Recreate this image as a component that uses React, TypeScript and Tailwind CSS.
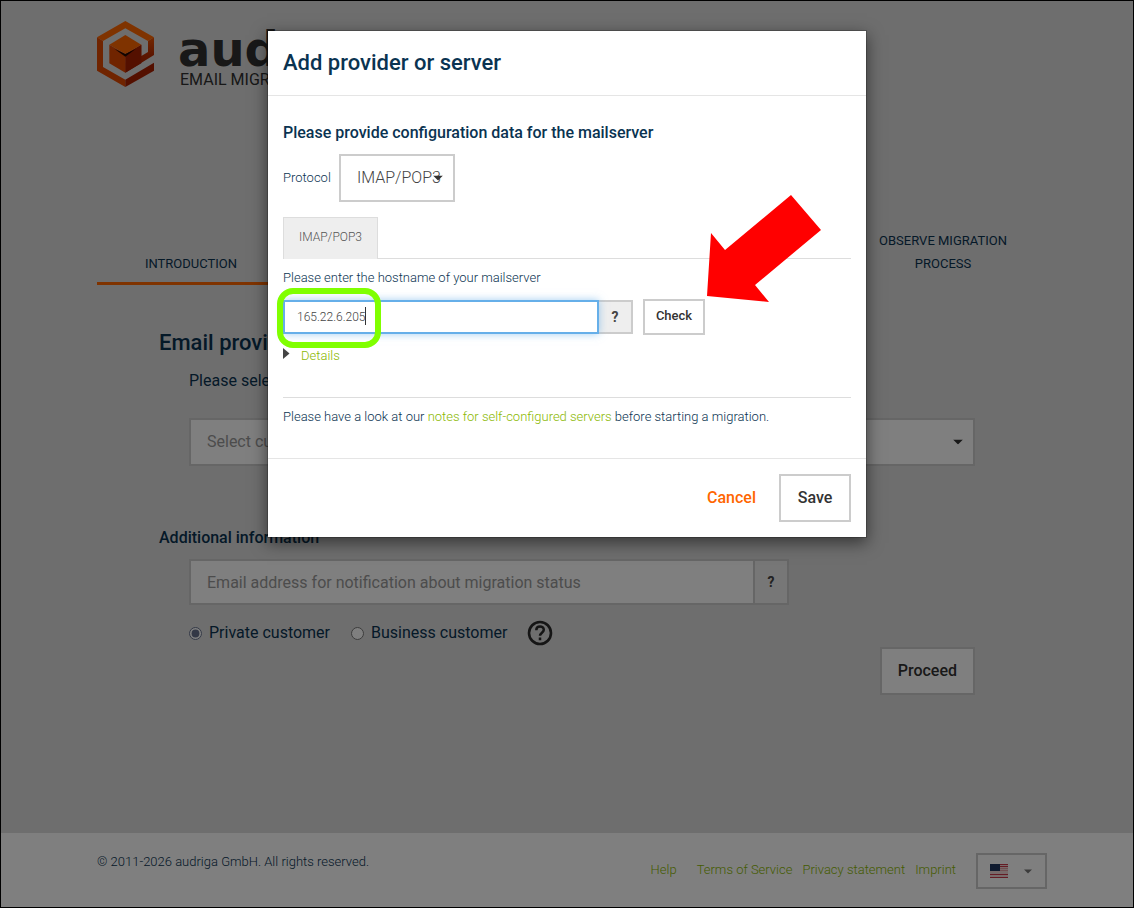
import React from "react";

const caret = "pointer-events-none absolute top-1/2 -translate-y-1/2";

function Caret({ className }: { className: string }) {
  return (
    <svg className={className} width="10" height="5" viewBox="0 0 10 5" aria-hidden="true">
      <path d="M0 0h10L5 5z" fill="currentColor" />
    </svg>
  );
}

function Logo() {
  return (
    <svg width="57" height="66" viewBox="51 63 171 198" aria-hidden="true">
      <defs>
        <linearGradient id="strand" x1="0" y1="0" x2="0" y2="1">
          <stop offset="0" stopColor="#e85000" />
          <stop offset="0.5" stopColor="#b82c00" />
          <stop offset="1" stopColor="#a82000" />
        </linearGradient>
      </defs>
      <path d="M136 63L222 112L204 123L136 85L69 123L51 112z" fill="#ff6600" />
      <path d="M51 112L69 123V201L136 239V261L51 212z" fill="#e04800" />
      <path d="M136 239L222 188V212L136 261z" fill="#a82000" />
      <path d="M136 162L184 134V168L204 156V123L222 112V165L136 218z" fill="url(#strand)" />
      <path d="M136 162L184 134V190L136 218z" fill="#a82000" />
      <path d="M136 105L184 134L136 162L88 134z" fill="#ff6600" />
      <path d="M88 134L136 162V218L88 190z" fill="#e04800" />
      <path d="M103 146L136 162L168 146L136 170z" fill="#220800" />
    </svg>
  );
}

function Flag() {
  return (
    <svg width="18" height="14" viewBox="0 0 18 14" aria-hidden="true">
      <path d="M0 0h18v14H0z" fill="#f0d4d4" />
      <path d="M0 .5h18M0 2.5h18M0 10.5h18M0 13.5h18" stroke="#c8384a" />
      <path d="M0 4.500h18M0 6.500h18" stroke="#e0a0a4" />
      <path d="M0 0h10v7H0z" fill="#20365f" />
    </svg>
  );
}

function Page() {
  return (
    <div className="flex min-h-screen flex-col bg-[#dddddd]">
      <div className="mx-auto w-full max-w-[940px] flex-1 pt-[21px] font-normal">
        <header className="flex h-[66px]">
          <Logo />
          <div className="ml-6 pt-[19px] text-[#303030]">
            <div className="h-[30px] font-['DejaVu_Sans'] text-[48px] leading-[18px] font-bold">aud</div>
            <div className="pl-[2px] text-base leading-5">EMAIL MIGRATION</div>
          </div>
        </header>
        <nav className="mt-[142px] grid grid-cols-5 items-end text-center text-[13px] leading-[23px]">
          <a href="#introduction" className="border-b-3 border-[#ff6600] pb-[7px]">INTRODUCTION</a>
          <a href="#observe" className="col-start-5 px-5 pb-[10px]">OBSERVE MIGRATION PROCESS</a>
        </nav>
        <main className="px-[62px]">
          <h2 className="mt-[43px] text-[22px] leading-[30px] font-medium">Email provider</h2>
          <div className="pl-[30px]">
            <p className="mt-[11px] leading-6">Please select</p>
            <div className="relative mt-[25px]">
              <select aria-label="Current provider" className="h-12 w-full appearance-none border-2 border-[#cccccc] bg-white px-4 text-[#999999]">
                <option>Select current provider</option>
              </select>
              <Caret className={`${caret} right-3 text-[#333333]`} />
            </div>
          </div>
          <h3 className="mt-[60px] leading-6 font-medium">Additional information</h3>
          <div className="pl-[30px]">
            <div className="mt-[9px] flex h-[46px] max-w-[600px]">
              <input type="email" aria-label="Notification email" placeholder="Email address for notification about migration status" className="min-w-0 flex-1 border-2 border-[#cccccc] bg-white px-4 pt-[2px] placeholder:text-[#999999]" />
              <button className="w-[34px] border-2 border-l-0 border-[#cccccc] bg-[#eeeeee] text-sm font-bold text-[#444444]">?</button>
            </div>
            <div className="mt-[15px] flex h-[26px] items-center">
              <label className="flex items-center gap-[7px]">
                <input type="radio" name="customer" defaultChecked className="size-[13px] accent-[#66708c]" />
                Private customer
              </label>
              <label className="ml-[21px] flex items-center gap-[7px]">
                <input type="radio" name="customer" className="size-[13px]" />
                Business customer
              </label>
              <svg className="ml-5" width="26" height="26" viewBox="0 0 26 26" fill="none" stroke="#2a2a2a" aria-hidden="true">
                <circle cx="13" cy="13" r="11" strokeWidth="2.6" />
                <path d="M9.3 10.2c0-5 7.5-4.700 7.500-.4 0 2.800-3.800 3-3.800 6M13 17.600v2.600" strokeWidth="2.500" />
              </svg>
            </div>
            <div className="mt-px flex justify-end">
              <button className="h-12 border-2 border-[#cccccc] bg-white px-4 font-medium text-[#333333]">Proceed</button>
            </div>
          </div>
        </main>
      </div>
      <footer className="h-[75px] bg-white text-[13px]">
        <div className="mx-auto flex w-full max-w-[940px] pt-5">
          <p className="flex-1 leading-[18px]">© 2011-2026 audriga GmbH. All rights reserved.</p>
          <div className="-mr-[10px] flex items-center text-[#8ab800]">
            <div className="flex gap-[10px] pb-[2px]">
              <a href="#help" className="mr-[10px]">Help</a>
              <a href="#terms">Terms of Service</a>
              <a href="#privacy">Privacy statement</a>
              <a href="#imprint">Imprint</a>
            </div>
            <button aria-label="Language" className="ml-5 flex h-9 w-[71px] items-center justify-between border-2 border-[#cccccc] pr-[13px] pl-3 text-[#777777]">
              <Flag />
              <Caret className="w-2" />
            </button>
          </div>
        </div>
      </footer>
    </div>
  );
}

function ProviderDialog() {
  return (
    <div role="dialog" aria-labelledby="dialog-title" className="mx-auto max-w-[600px] border border-black/20 bg-white bg-clip-padding shadow-[0_5px_15px_rgba(0,0,0,0.5)]">
      <div className="border-b border-[#e5e5e5] px-[15px] py-4">
        <h1 id="dialog-title" className="text-[22px] leading-8 font-medium">Add provider or server</h1>
      </div>
      <div className="px-[15px] pt-[25px] pb-[31px] text-[13px] leading-5">
        <h2 className="text-base leading-6 font-medium">Please provide configuration data for the mailserver</h2>
        <div className="mt-[9px] flex items-center gap-[10px]">
          <label htmlFor="protocol" className="w-[46px]">Protocol</label>
          <div className="relative">
            <select id="protocol" className="h-12 w-[116px] appearance-none border-2 border-[#cccccc] bg-white pl-4 text-base text-[#444444]">
              <option>IMAP/POP3</option>
            </select>
            <Caret className={`${caret} right-3 text-[#333333]`} />
          </div>
        </div>
        <div className="mt-[15px] flex border-b border-[#dddddd]">
          <button className="-mb-px h-[42px] w-[95px] border border-b-0 border-[#dddddd] bg-[#eeeeee] pb-1 text-xs text-[#555555]">IMAP/POP3</button>
        </div>
        <label htmlFor="hostname" className="mt-[9px] block">Please enter the hostname of your mailserver</label>
        <div className="mt-[11px] flex items-center">
          <div className="relative h-[34px] w-[316px]">
            <input id="hostname" defaultValue="165.22.6.205" className="relative z-10 h-full w-full border-2 border-[#66afe9] bg-white px-3 text-xs text-[#444444] shadow-[0_0_8px_rgba(102,175,233,0.6)] outline-none" />
            <span className="absolute top-[7px] left-[82px] z-10 h-[18px] w-px bg-[#333333]" />
            <span className="absolute -top-3 -left-[6px] z-20 h-[60px] w-[104px] rounded-[16px] border-6 border-[#80ff00]" />
          </div>
          <button className="h-[34px] w-[34px] border-2 border-l-0 border-[#cccccc] bg-[#eeeeee] text-sm font-bold text-[#444444]">?</button>
          <div className="relative ml-[10px]">
            <button className="h-9 w-[62px] border-2 border-[#cccccc] bg-white pb-[3px] font-medium text-[#333333]">Check</button>
            <svg className="absolute -top-[104px] left-16" width="114" height="107" viewBox="0 0 114 107" aria-hidden="true">
              <path d="M0 101L4 38L18 55L84 0L114 35L48 90L62 107z" fill="#ff0000" />
            </svg>
          </div>
        </div>
        <button className="mt-[11px] flex items-start gap-[11px] text-[#8ab800]">
          <svg className="mt-[2px]" width="7" height="11" viewBox="0 0 7 11" aria-hidden="true">
            <path d="M0 0L6.500 5.500L0 11z" fill="#444444" />
          </svg>
          Details
        </button>
        <p className="mt-[31px] border-t border-[#dddddd] pt-[9px]">
          Please have a look at our <a href="#notes" className="text-[#8ab800]">notes for self-configured servers</a> before starting a migration.
        </p>
      </div>
      <div className="flex items-center justify-end gap-[23px] border-t border-[#e5e5e5] p-[15px] font-medium">
        <button className="text-[#ff6600]">Cancel</button>
        <button className="h-12 w-[72px] border-2 border-[#cccccc] text-[#333333]">Save</button>
      </div>
    </div>
  );
}

export default function App() {
  return (
    <div className="relative font-['Roboto',sans-serif] text-base font-light text-[#0a3351]">
      <Page />
      <div className="absolute inset-0 border border-black bg-black/50 pt-[29px]">
        <ProviderDialog />
      </div>
    </div>
  );
}
